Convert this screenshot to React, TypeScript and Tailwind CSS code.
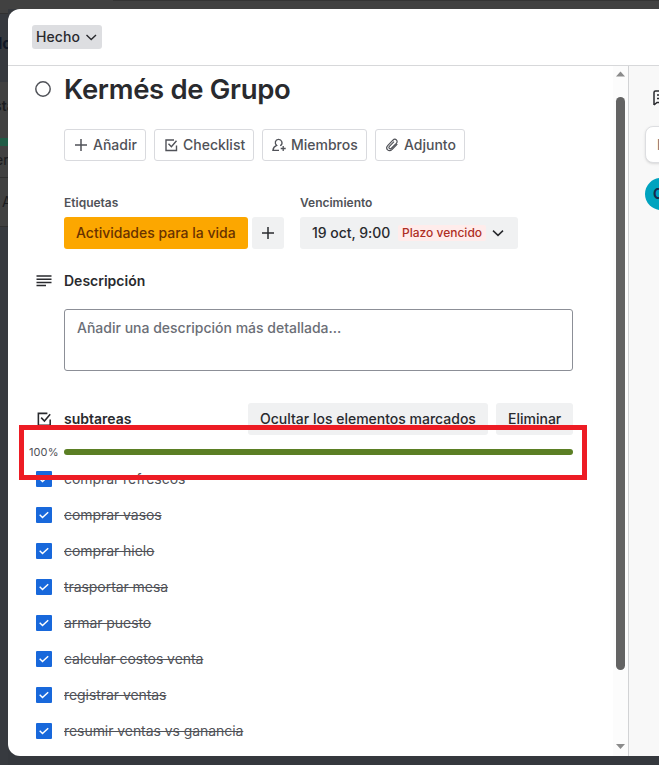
import React from "react";

const tasks = [
  "comprar refrescos",
  "comprar vasos",
  "comprar hielo",
  "trasportar mesa",
  "armar puesto",
  "calcular costos venta",
  "registrar ventas",
  "resumir ventas vs ganancia",
];

function Plus() {
  return (
    <svg className="block size-4 shrink-0" viewBox="0 0 16 16" fill="none" stroke="currentColor" strokeWidth="1.5">
      <path d="M8 2v12M2 8h12" />
    </svg>
  );
}

function Check({ size = "size-4" }: { size?: string }) {
  return (
    <svg className={`block shrink-0 ${size}`} viewBox="0 0 16 16" fill="none" stroke="currentColor" strokeWidth="1.4">
      <path d="M13.5 8.5v5h-10.500v-10.500h8M5.500 6.800l2.900 3 5.100-6" />
    </svg>
  );
}

function Member() {
  return (
    <svg className="block size-4 shrink-0" viewBox="0 0 16 16" fill="none" stroke="currentColor" strokeWidth="1.3">
      <path d="M9.2 8.7C11 7.7 11.3 6 10.8 4.6 9.7 1.7 5.3 1.7 4.4 4.7c-.4 1.500.2 2.800 1.300 3.700C3.500 9.300 2.200 10.800 1.900 13.300H8M12.200 9v5M9.700 11.500h5" />
    </svg>
  );
}

function Clip() {
  return (
    <svg className="block size-4 shrink-0" viewBox="0 0 16 16" fill="none" stroke="currentColor" strokeWidth="1.2">
      <path d="M13.300 7.200 8.200 12.400c-3.300 3.200-7.500-.700-4.300-4.100l5-5.100c2.500-2.400 5.800.700 3.400 3.200L7.400 11.200c-1.500 1.400-3.400-.300-2-1.800l4.600-4.700" />
    </svg>
  );
}

function Chevron() {
  return (
    <svg className="block size-4 shrink-0" viewBox="0 0 16 16" fill="none" stroke="currentColor" strokeWidth="1.5">
      <path d="m3 5.600 5 4.800 5-4.800" />
    </svg>
  );
}

function Action({ icon, label, width }: { icon: React.ReactNode; label: string; width: string }) {
  return (
    <div className={`flex h-8 items-center gap-1 rounded-[3px] border border-[#d9dade] pl-2 text-[#505258] ${width}`}>
      {icon}
      <span className="whitespace-nowrap">{label}</span>
    </div>
  );
}

function Board() {
  return (
    <div className="w-2 shrink-0 overflow-hidden whitespace-nowrap bg-[#373a3f] text-[14px] leading-4 text-[#1a1b1e]">
      <div className="h-[13px] bg-[#414141]" />
      <div className="h-[69px] border-t border-[#303030] bg-[#36393e] pt-[21px] text-[16px] font-bold text-[#111827]">
        <span className="-ml-[2px]">lo</span>
      </div>
      <div className="h-[56px] bg-[#414141] pt-[16px] font-semibold">
        <span className="-ml-[6px]">sta</span>
      </div>
      <div className="h-2 bg-[#205b46]" />
      <div className="h-[23px] bg-[#414141] pt-[6px]">
        <span className="-ml-[5px]">er</span>
      </div>
      <div className="h-[9px] border-b border-[#303030] bg-[#414141]" />
      <div className="h-[49px] border-b border-[#303030] bg-[#414141] pl-[2px] pt-[16px]">A</div>
    </div>
  );
}

export default function App() {
  return (
    <div className="relative flex h-[765px] w-[659px] overflow-hidden bg-[#35383d] font-['Inter',sans-serif] text-[14px] leading-5 text-[#292a2e]">
      <Board />
      <div className="flex min-w-0 flex-1 flex-col">
        <div className="h-[9px] shrink-0 bg-[#414141]">
          <div className="ml-[105px] h-px bg-[#343434]" />
        </div>
        <div className="flex h-[747px] shrink-0">
          <main className="flex min-w-0 flex-1 flex-col overflow-hidden rounded-l-[12px] bg-white">
            <header className="flex h-[57px] shrink-0 items-center border-b border-[#d7d8da] pl-6">
              <div className="flex h-6 w-[70px] items-center rounded-[3px] bg-[#dddee1] pl-1">
                <span className="w-[49px] text-[14px] font-medium tracking-[0.1px]">Hecho</span>
                <svg className="block size-3.5 shrink-0" viewBox="0 0 14 14" fill="none" stroke="currentColor" strokeWidth="1.4">
                  <path d="m1.500 5 4.700 4.500L11 5" />
                </svg>
              </div>
            </header>
            <div className="flex min-h-0 flex-1">
              <div className="w-[605px] shrink-0 pl-[27px]">
                <div className="flex h-[46px] items-center">
                  <svg className="block size-4 shrink-0" viewBox="0 0 16 16" fill="none" stroke="#505258" strokeWidth="1.5">
                    <circle cx="8" cy="8" r="7.200" />
                  </svg>
                  <h1 className="ml-[13px] whitespace-nowrap text-[27.5px] font-semibold leading-8 tracking-[-0.33px]">Kermés de Grupo</h1>
                </div>
                <div className="mt-[17px] flex gap-2 pl-[29px] font-medium">
                  <Action icon={<Plus />} label="Añadir" width="w-[82px]" />
                  <Action icon={<Check />} label="Checklist" width="w-[100px]" />
                  <Action icon={<Member />} label="Miembros" width="w-[105px]" />
                  <Action icon={<Clip />} label="Adjunto" width="w-[90px]" />
                </div>
                <div className="mt-[34px] flex gap-4 pl-[29px]">
                  <section>
                    <h2 className="mb-1 h-[18px] text-[12px] font-semibold leading-4 text-[#505258]">Etiquetas</h2>
                    <div className="flex gap-1">
                      <div className="flex h-8 w-[184px] items-center whitespace-nowrap rounded-[3px] bg-[#fca700] pl-3 font-medium text-[#693200]">Actividades para la vida</div>
                      <div className="flex size-8 items-center justify-center rounded-[3px] bg-[#f0f1f2]"><Plus /></div>
                    </div>
                  </section>
                  <section>
                    <h2 className="mb-1 h-[18px] text-[12px] font-semibold leading-4 text-[#505258]">Vencimiento</h2>
                    <div className="flex h-8 w-[218px] items-center rounded-[3px] bg-[#f0f1f2] pl-3 font-medium">
                      <span className="w-[86px] whitespace-nowrap tracking-[-0.03px]">19 oct, 9:00</span>
                      <span className="h-4 w-[88px] whitespace-nowrap rounded-[2px] bg-[#ffeceb] pl-1 text-[12px] leading-4 text-[#ae2e24]">Plazo vencido</span>
                      <span className="ml-1"><Chevron /></span>
                    </div>
                  </section>
                </div>
                <div className="mt-[22px] flex h-5 items-center">
                  <svg className="block size-[18px] shrink-0" viewBox="0 0 18 18" stroke="currentColor" strokeWidth="1.5">
                    <path d="M1.500 4h15M1.500 7.200h15M1.500 10.400h15M1.500 13.600h9.500" />
                  </svg>
                  <h2 className="ml-[11px] font-semibold">Descripción</h2>
                </div>
                <div className="ml-[29px] mt-[18px] h-[62px] w-[509px] rounded-[3px] border border-[#8c8f97] pl-3 pt-2 font-medium text-[#6b6e76]">Añadir una descripción más detallada...</div>
                <div className="mt-8 flex h-8 w-[538px] items-center">
                  <Check size="size-[18px]" />
                  <h2 className="ml-[11px] font-semibold">subtareas</h2>
                  <div className="ml-auto flex gap-2 font-medium">
                    <div className="flex h-8 w-[240px] items-center whitespace-nowrap rounded-[3px] bg-[#f0f1f2] pl-3">Ocultar los elementos marcados</div>
                    <div className="flex h-8 w-[77px] items-center rounded-[3px] bg-[#f0f1f2] pl-3">Eliminar</div>
                  </div>
                </div>
                <div className="mt-[9px] flex h-4 items-center">
                  <span className="-ml-[6px] w-[35px] text-[11px] leading-4 tracking-[0.1px] text-[#505258]">100%</span>
                  <div className="h-[6px] w-[509px] rounded-full bg-[#5b7f24]" />
                </div>
                <ul className="mt-[1px]">
                  {tasks.map((task) => (
                    <li key={task} className="flex h-9 items-center pl-[1px] text-[#505258]">
                      <span className="flex size-4 items-center justify-center rounded-[1px] bg-[#1868db] text-white">
                        <svg className="block size-4" viewBox="0 0 16 16" fill="none" stroke="currentColor" strokeWidth="1.5">
                          <path d="m3.700 7.800 2.800 2.700 5.700-5.300" />
                        </svg>
                      </span>
                      <span className="ml-3 whitespace-nowrap tracking-[-0.06px] line-through">{task}</span>
                    </li>
                  ))}
                </ul>
              </div>
              <div className="flex w-[15px] shrink-0 flex-col items-center bg-[#fcfcfc]">
                <svg className="mt-[5px] h-[6px] w-[9px] shrink-0" viewBox="0 0 9 6"><path d="M0 5.500h9L4.500.5z" fill="#8b8b8b" /></svg>
                <div className="mt-5 h-[573px] w-[9px] shrink-0 rounded-full bg-[#636363]" />
                <svg className="mt-[74px] h-[5px] w-[9px] shrink-0" viewBox="0 0 9 5"><path d="M0 0h9L4.500 5z" fill="#8b8b8b" /></svg>
              </div>
              <aside className="w-[31px] shrink-0 overflow-hidden border-l border-[#d2d3d5] bg-[#f8f8f8] pl-4">
                <svg className="ml-[7px] mt-[23px] block size-[18px]" viewBox="0 0 18 18" fill="none" stroke="#292a2e" strokeWidth="1.500">
                  <path d="M2 16V3.500Q2 2 3.500 2H18M2 16l3-2.500h13M5 6h12M5 9.500h12" />
                </svg>
                <div className="mt-[19px] h-[37px] w-[100px] rounded-lg border border-[#dddee1] bg-white pl-[11px] pt-2 font-medium text-[#6b6e76] shadow-sm">E</div>
                <div className="mt-[15px] flex size-8 items-center rounded-full bg-[#00a3bf] pl-[8px] font-bold text-[#172b4d]">C</div>
              </aside>
            </div>
          </main>
        </div>
      </div>
      <div className="absolute left-[19px] top-[425px] h-[55px] w-[568px] border-[5px] border-[#ed1c24]" />
    </div>
  );
}
